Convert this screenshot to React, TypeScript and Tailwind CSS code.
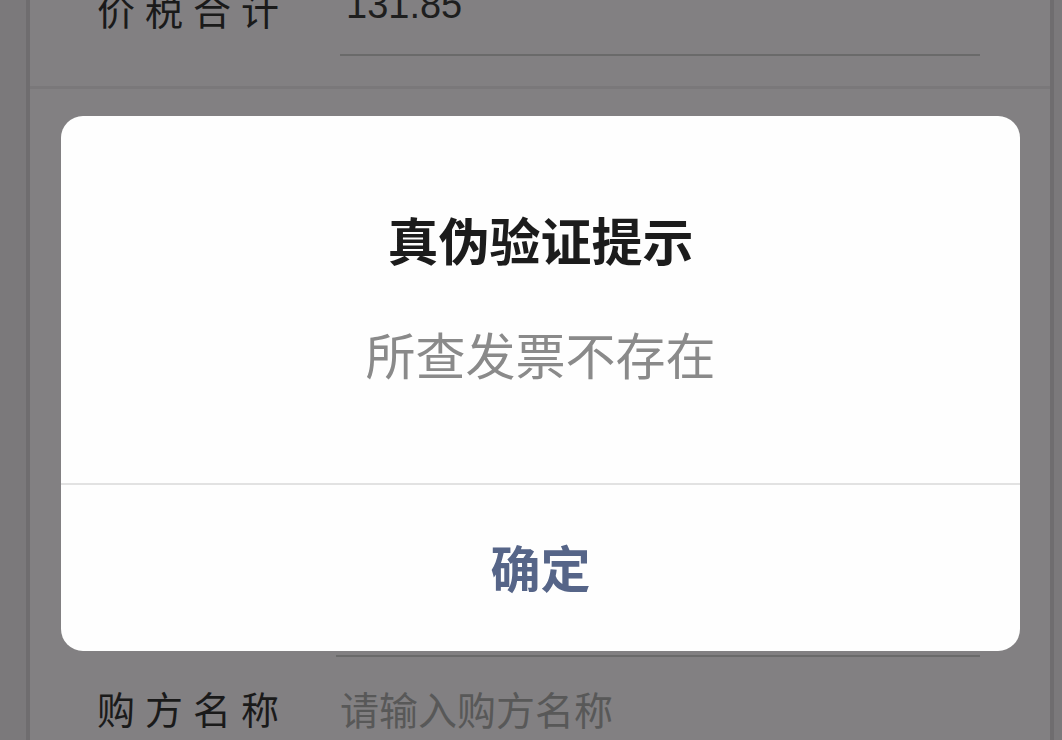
import React from "react";

const font = '"Noto Sans CJK SC", "Noto Sans", "Liberation Sans", sans-serif';

export default function App() {
  return (
    <div
      className="relative w-[1062px] h-[740px] overflow-hidden bg-[#7b797b] flex"
      style={{ fontFamily: font }}
    >
      <div className="w-[26px] shrink-0" />
      <div className="w-[4px] shrink-0 bg-[#6f6d6f]" />
      <div className="flex-1 bg-[#828082] flex flex-col">
        {/* Row 1 (scrolled partially) */}
        <div className="h-[86px] flex items-start pl-[67px] pr-[70px]">
          <div className="w-[243px] shrink-0 -mt-[16px] text-[38px] leading-[50px] tracking-[10px] text-[#1a1a1a]">
            价税合计
          </div>
          <div className="flex-1 flex flex-col">
            <div className="-mt-[20px] h-[50px] text-[38px] leading-[50px] text-[#1e1e1e] pl-[6px]" style={{ fontFamily: '"Liberation Sans Narrow", "Liberation Sans", sans-serif' }}>
              131.85
            </div>
            <div className="mt-[24px] h-[2px] bg-[#6a6a6a]" />
          </div>
        </div>
        <div className="h-[3px] bg-[#7a787a]" />
        <div className="flex-1 flex flex-col">
          <div className="h-[566px]" />
          <div className="flex pl-[306px] pr-[70px]">
            <div className="flex-1 h-[2px] bg-[#6a6a6a]" />
          </div>
          <div className="flex items-center pl-[67px] mt-[26px]">
            <div className="w-[243px] shrink-0 text-[38px] leading-[50px] tracking-[10px] text-[#1a1a1a]">
              购方名称
            </div>
            <div className="text-[39px] leading-[50px] text-[#585858]">请输入购方名称</div>
          </div>
        </div>
      </div>
      <div className="w-[4px] shrink-0 bg-[#6f6d6f]" />
      <div className="w-[8px] shrink-0" />

      {/* Modal */}
      <div className="absolute left-[61px] top-[116px] w-[959px] h-[535px] bg-[#fefefe] rounded-[22px] flex flex-col overflow-hidden">
        <div className="h-[367px] flex flex-col items-center">
          <div className="mt-[93px] text-[51px] leading-[60px] font-bold text-[#1c1c1c]">真伪验证提示</div>
          <div className="mt-[54px] text-[50px] leading-[60px] text-[#8a8a8a]">所查发票不存在</div>
        </div>
        <div className="h-[2px] bg-[#e2e2e2]" />
        <div className="flex-1 flex items-start justify-center">
          <div className="mt-[51px] text-[50px] leading-[60px] font-bold text-[#566588]">确定</div>
        </div>
      </div>
    </div>
  );
}
